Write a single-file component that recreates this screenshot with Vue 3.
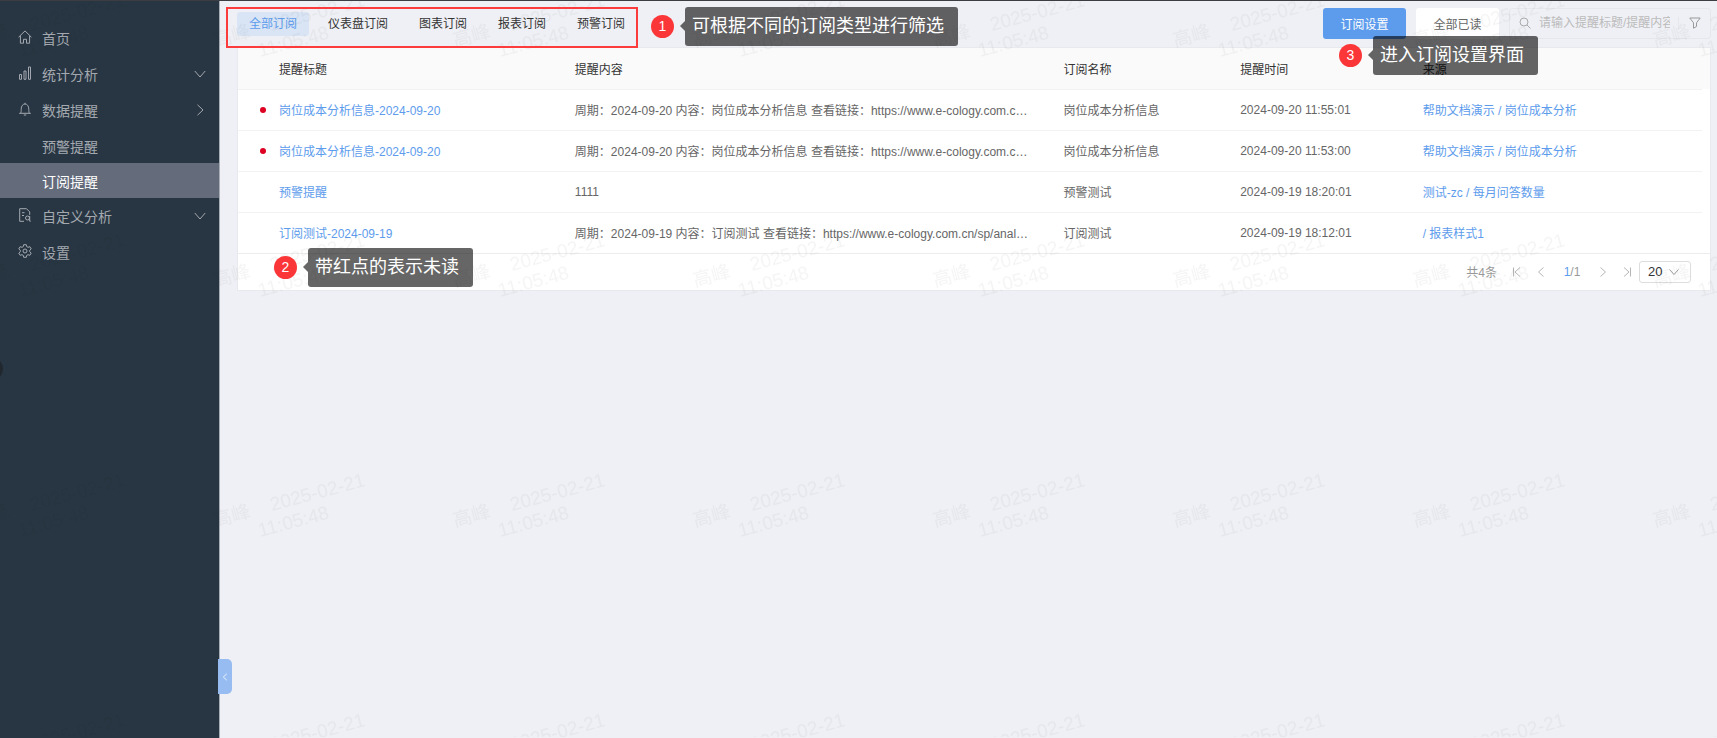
<script setup>
import { ref } from 'vue'

// 左侧菜单
const menus = [
  { key: 'home', label: '首页', icon: 'home' },
  { key: 'stat', label: '统计分析', icon: 'chart', arrow: 'down' },
  { key: 'remind', label: '数据提醒', icon: 'bell', arrow: 'right' },
  { key: 'warn', label: '预警提醒', sub: true },
  { key: 'subscribe', label: '订阅提醒', sub: true },
  { key: 'custom', label: '自定义分析', icon: 'doc', arrow: 'down' },
  { key: 'setting', label: '设置', icon: 'gear' }
]
const activeMenu = ref('subscribe')

// 订阅类型
const tabs = ['全部订阅', '仪表盘订阅', '图表订阅', '报表订阅', '预警订阅']
const activeTab = ref('全部订阅')

const keyword = ref('')
const pageSize = ref(20)

// 提醒列表
const rows = ref([
  {
    id: 1,
    unread: true,
    title: '岗位成本分析信息-2024-09-20',
    content: '周期：2024-09-20 内容：岗位成本分析信息 查看链接：https://www.e-cology.com.cn/s',
    name: '岗位成本分析信息',
    time: '2024-09-20 11:55:01',
    source: '帮助文档演示 / 岗位成本分析'
  },
  {
    id: 2,
    unread: true,
    title: '岗位成本分析信息-2024-09-20',
    content: '周期：2024-09-20 内容：岗位成本分析信息 查看链接：https://www.e-cology.com.cn/s',
    name: '岗位成本分析信息',
    time: '2024-09-20 11:53:00',
    source: '帮助文档演示 / 岗位成本分析'
  },
  {
    id: 3,
    unread: false,
    title: '预警提醒',
    content: '1111',
    name: '预警测试',
    time: '2024-09-19 18:20:01',
    source: '测试-zc / 每月问答数量'
  },
  {
    id: 4,
    unread: false,
    title: '订阅测试-2024-09-19',
    content: '周期：2024-09-19 内容：订阅测试 查看链接：https://www.e-cology.com.cn/sp/analysis',
    name: '订阅测试',
    time: '2024-09-19 18:12:01',
    source: '/ 报表样式1'
  }
])

// 全部标记为已读
function readAll() {
  rows.value.forEach(row => {
    row.unread = false
  })
}
</script>

<template>
  <div class="layout">
    <aside class="sidebar">
      <nav class="menu">
        <a
          v-for="item in menus"
          :key="item.key"
          href="#"
          class="menu-item"
          :class="{ sub: item.sub, active: activeMenu === item.key }"
          @click.prevent="activeMenu = item.key"
        >
          <span class="menu-icon">
            <svg v-if="item.icon === 'home'" viewBox="0 0 14 14">
              <path d="M.6 7.2 7 .9l6.400 6.300M2.400 6v7.200h3.100V9.300h3v3.900h3.100V6" />
            </svg>
            <svg v-else-if="item.icon === 'chart'" viewBox="0 0 14 14">
              <path d="M1.500 8.500h2v4.800h-2zM6 5h2v8.300H6zM10.500 1h2v12.300h-2z" />
            </svg>
            <svg v-else-if="item.icon === 'bell'" viewBox="0 0 14 14">
              <path d="M1.200 11.300h11.600M2.600 11.300c.5-.9.600-2 .6-4C3.200 4.200 4.700 2 7 2s3.800 2.200 3.800 5.300c0 2 .1 3.100.6 4M7 2V.8M5.800 13h2.400" />
            </svg>
            <svg v-else-if="item.icon === 'doc'" viewBox="0 0 14 14">
              <path d="M6 13.300H1.700V.7h6.800l3.200 3.200v3M4 4.700h2.500M4 7.500h2" />
              <circle cx="9.500" cy="10" r="2" />
              <path d="M11.700 8v5.200h1" />
            </svg>
            <svg v-else-if="item.icon === 'gear'" viewBox="0 0 14 14">
              <path d="M5.700.7h2.600l.4 1.900 1.300.7 1.900-.6 1.300 2.200-1.500 1.400v1.400l1.500 1.400-1.300 2.200-1.900-.6-1.300.7-.4 1.900H5.700l-.4-1.900-1.300-.7-1.900.6L.8 9.100l1.500-1.400V6.300L.8 4.900l1.300-2.200 1.900.6 1.300-.7z" />
              <circle cx="7" cy="7" r="2" />
            </svg>
          </span>
          <span class="menu-label">{{ item.label }}</span>
          <svg v-if="item.arrow" class="menu-arrow" viewBox="0 0 12 12">
            <path v-if="item.arrow === 'down'" d="M.8 3 6 9l5.200-6" />
            <path v-else d="m3.500.8 5.500 5.200-5.500 5.200" />
          </svg>
        </a>
      </nav>
      <span class="edge-dot"></span>
      <button class="collapse" type="button" aria-label="收起菜单">
        <svg viewBox="0 0 8 8"><path d="M5.800.8 2.300 4l3.500 3.200" /></svg>
      </button>
    </aside>

    <main class="main">
      <header class="toolbar">
        <div class="tabs">
          <button
            v-for="tab in tabs"
            :key="tab"
            type="button"
            class="tab"
            :class="{ active: activeTab === tab }"
            @click="activeTab = tab"
          >{{ tab }}</button>
          <div class="tabs-frame"></div>
          <div class="note note-filter">
            <span class="note-num">1</span>
            <span class="note-text">可根据不同的订阅类型进行筛选</span>
          </div>
        </div>
        <div class="actions">
          <button type="button" class="btn btn-primary">订阅设置</button>
          <button type="button" class="btn" @click="readAll">全部已读</button>
          <div class="search">
            <svg class="search-icon" viewBox="0 0 12 12">
              <circle cx="5" cy="5" r="4" />
              <path d="m8 8 3.500 3.500" />
            </svg>
            <input v-model="keyword" type="text" placeholder="请输入提醒标题/提醒内容" aria-label="搜索提醒" />
            <button type="button" class="filter" aria-label="高级筛选">
              <svg viewBox="0 0 12 12"><path d="M.8 1h10.400L7.500 5.800v3.700l-3 1.700V5.800z" /></svg>
            </button>
          </div>
          <div class="note note-setting">
            <span class="note-num">3</span>
            <span class="note-text">进入订阅设置界面</span>
          </div>
        </div>
      </header>

      <section class="card">
        <table class="table">
          <colgroup>
            <col class="col-dot" />
            <col class="col-title" />
            <col class="col-content" />
            <col class="col-name" />
            <col class="col-time" />
            <col />
            <col class="col-gutter" />
          </colgroup>
          <thead>
            <tr>
              <th></th>
              <th>提醒标题</th>
              <th>提醒内容</th>
              <th>订阅名称</th>
              <th>提醒时间</th>
              <th>来源</th>
              <th class="gutter"></th>
            </tr>
          </thead>
          <tbody>
            <tr v-for="row in rows" :key="row.id">
              <td class="dot-cell"><span v-if="row.unread" class="dot"></span></td>
              <td><a href="#">{{ row.title }}</a></td>
              <td class="content-cell">{{ row.content }}</td>
              <td>{{ row.name }}</td>
              <td>{{ row.time }}</td>
              <td><a href="#">{{ row.source }}</a></td>
              <td class="gutter"></td>
            </tr>
          </tbody>
        </table>

        <footer class="pager">
          <div class="note note-unread">
            <span class="note-num">2</span>
            <span class="note-text">带红点的表示未读</span>
          </div>
          <span class="total">共{{ rows.length }}条</span>
          <button type="button" class="page-btn" aria-label="首页">
            <svg viewBox="0 0 10 10"><path d="M1.500.5v9M8 .5 3 5l5 4.500" /></svg>
          </button>
          <button type="button" class="page-btn" aria-label="上一页">
            <svg viewBox="0 0 10 10"><path d="M7.500.5 2.500 5l5 4.500" /></svg>
          </button>
          <span class="page-no"><b>1</b>/1</span>
          <button type="button" class="page-btn" aria-label="下一页">
            <svg viewBox="0 0 10 10"><path d="m2.500.5 5 4.500-5 4.500" /></svg>
          </button>
          <button type="button" class="page-btn" aria-label="末页">
            <svg viewBox="0 0 10 10"><path d="M8.500.5v9M2 .5 7 5 2 9.500" /></svg>
          </button>
          <div class="size">
            <select v-model="pageSize" aria-label="每页条数">
              <option :value="10">10</option>
              <option :value="20">20</option>
              <option :value="50">50</option>
            </select>
            <svg viewBox="0 0 10 10"><path d="M.5 2.500 5 7.500l4.500-5" /></svg>
          </div>
        </footer>
      </section>
    </main>

    <!-- 水印 -->
    <svg class="watermark" aria-hidden="true">
      <defs>
        <pattern id="wm" x="-30" y="-20" width="240" height="240" patternUnits="userSpaceOnUse">
          <text transform="translate(5 67) rotate(-15)">高峰</text>
          <text transform="translate(62 51) rotate(-15)">2025-02-21</text>
          <text transform="translate(50 77) rotate(-15)">11:05:48</text>
        </pattern>
      </defs>
      <rect width="100%" height="100%" fill="url(#wm)" />
    </svg>
  </div>
</template>

<style>
body {
  margin: 0;
  background: #eff0f5;
}
</style>

<style scoped>
.layout {
  position: relative;
  display: flex;
  box-sizing: border-box;
  min-height: 100vh;
  border-top: 1px solid #3c3d42;
  background: #eff0f5;
  color: #666;
  font-family: "Liberation Sans", "Noto Sans CJK SC", sans-serif;
  font-size: 12px;
  overflow: hidden;
}

svg {
  display: block;
  fill: none;
  stroke: currentColor;
}

a {
  color: #5d9cec;
  text-decoration: none;
}

button,
input,
select {
  margin: 0;
  padding: 0;
  border: 0;
  background: none;
  color: inherit;
  font: inherit;
}

button {
  cursor: pointer;
}

/* 侧边栏 */
.sidebar {
  position: relative;
  flex: 0 0 219px;
  padding-top: 19px;
  border-right: 1px solid #a9adb5;
  background: #283643;
}

.menu-item {
  display: flex;
  align-items: center;
  height: 36px;
  padding: 0 13px 0 18px;
  color: #a4a9b0;
  font-size: 14px;
}

.menu-item.sub {
  height: 35px;
}

.menu-item.active {
  background: #646b7b;
  color: #fff;
}

.menu-icon {
  width: 14px;
  height: 14px;
  margin-right: 10px;
  padding-bottom: 2px;
}

.menu-label {
  flex: 1;
}

.menu-arrow {
  width: 12px;
  height: 12px;
}

.edge-dot {
  position: absolute;
  top: 356px;
  left: -21px;
  width: 24px;
  height: 24px;
  border-radius: 50%;
  background: #20272e;
}

.collapse {
  position: absolute;
  bottom: 44px;
  right: -13px;
  display: flex;
  align-items: center;
  justify-content: center;
  width: 14px;
  height: 35px;
  border-radius: 0 5px 5px 0;
  background: #97bcf1;
  color: #e8f1fd;
}

.collapse svg {
  flex: none;
  width: 8px;
  height: 8px;
}

/* 顶部工具栏 */
.main {
  flex: 1;
  min-width: 0;
  padding: 0 6px 0 17px;
}

.toolbar {
  display: flex;
  align-items: center;
  justify-content: space-between;
  height: 46px;
}

.tabs {
  position: relative;
  display: flex;
  gap: 7px;
}

.tab {
  height: 24px;
  padding: 0 12px;
  border-radius: 3px;
  color: #333;
  line-height: 20px;
  white-space: nowrap;
}

.tab.active {
  background: #d9e5f5;
  color: #5d9cec;
}

.tabs-frame {
  position: absolute;
  inset: -5px -1px -12px -11px;
  z-index: 3;
  border: 2px solid #fb3b3c;
  pointer-events: none;
}

.actions {
  position: relative;
  display: flex;
  gap: 10px;
  padding-bottom: 2px;
}

.btn {
  width: 83px;
  height: 31px;
  border-radius: 3px;
  background: #fff;
}

.btn-primary {
  background: #5d9cec;
  color: #fff;
}

.search {
  display: flex;
  align-items: center;
  box-sizing: border-box;
  width: 202px;
  height: 31px;
  padding: 0 9px;
  border: 1px solid #e6e7eb;
  border-radius: 3px;
}

.search-icon {
  flex: none;
  width: 12px;
  height: 12px;
  margin-right: 8px;
  color: #aaa;
}

.search input {
  flex: 1;
  min-width: 0;
  height: 24px;
  outline: none;
}

.search input::placeholder {
  color: #bbb;
  opacity: 1;
}

.filter {
  margin-left: 8px;
  padding-left: 10px;
  border-left: 1px solid #e6e7eb;
  color: #999;
}

.filter svg {
  width: 12px;
  height: 12px;
}

/* 列表 */
.card {
  border: 1px solid #e8e9ed;
  background: #fff;
}

.table {
  width: 100%;
  border-collapse: collapse;
  table-layout: fixed;
}

.col-dot {
  width: 33px;
}

.col-title {
  width: 20.1%;
}

.col-content {
  width: 33.2%;
}

.col-name {
  width: 12%;
}

.col-time {
  width: 12.4%;
}

.col-gutter {
  width: 8px;
}

th,
td {
  box-sizing: border-box;
  height: 41px;
  padding: 0 8px;
  border-bottom: 1px solid #f2f2f3;
  overflow: hidden;
  font-weight: normal;
  text-align: left;
  text-overflow: ellipsis;
  white-space: nowrap;
}

th {
  background: #fafafa;
  color: #333;
}

.content-cell {
  padding-right: 26px;
}

.gutter {
  padding: 0;
  border-bottom: 0;
}

tbody tr:last-child td {
  border-bottom: 1px solid #ededee;
}

.dot-cell {
  padding: 0 6px 0 22px;
}

.dot {
  display: block;
  width: 6px;
  height: 6px;
  border-radius: 50%;
  background: #dd0221;
}

/* 分页 */
.pager {
  position: relative;
  display: flex;
  align-items: center;
  justify-content: flex-end;
  height: 36px;
  padding-right: 19px;
  color: #999;
}

.total {
  margin-right: 8px;
}

.page-btn {
  display: flex;
  align-items: center;
  justify-content: center;
  width: 24px;
  height: 24px;
  color: #b5b5b5;
}

.page-btn svg,
.size svg {
  width: 10px;
  height: 10px;
}

.page-no {
  width: 38px;
  text-align: center;
}

.page-no b {
  color: #5d9cec;
  font-weight: normal;
}

.size {
  position: relative;
  box-sizing: border-box;
  width: 52px;
  height: 22px;
  border: 1px solid #ddd;
  border-radius: 3px;
}

.size select {
  width: 100%;
  height: 100%;
  padding: 0 8px;
  appearance: none;
  color: #333;
  font-size: 13px;
}

.size svg {
  position: absolute;
  top: 5px;
  right: 11px;
  pointer-events: none;
}

/* 标注 */
.note {
  position: absolute;
  z-index: 3;
  display: flex;
  align-items: center;
  gap: 11px;
  pointer-events: none;
}

.note-num {
  width: 23px;
  height: 23px;
  border-radius: 50%;
  background: #fb3638;
  color: #fff;
  font-size: 14px;
  line-height: 22px;
  text-align: center;
}

.note-text {
  position: relative;
  padding: 0 14px 0 7px;
  border-radius: 3px;
  background: rgba(0, 0, 0, 0.6);
  color: #fff;
  font-size: 18px;
  line-height: 39px;
  white-space: nowrap;
}

.note-text::before {
  content: "";
  position: absolute;
  top: 14px;
  right: 100%;
  border: 5px solid transparent;
  border-left-width: 0;
  border-right-color: rgba(0, 0, 0, 0.6);
}

.note-filter {
  top: -5px;
  left: 414px;
}

.note-setting {
  top: 28px;
  left: 16px;
}

.note-unread {
  top: -6px;
  left: 36px;
}

.watermark {
  position: absolute;
  top: -1px;
  left: 0;
  z-index: 2;
  width: 100%;
  height: 100%;
  stroke: none;
  pointer-events: none;
}

.watermark text {
  fill: rgba(0, 0, 0, 0.04);
  font-size: 19px;
}
</style>
